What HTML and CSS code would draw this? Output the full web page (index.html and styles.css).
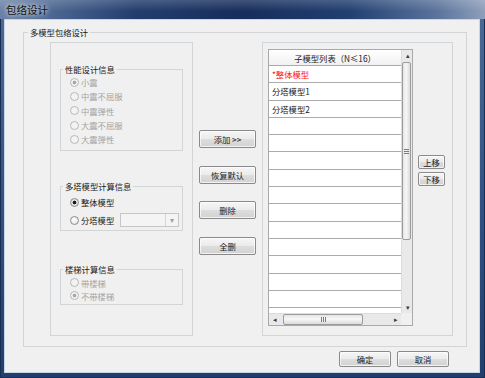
FILE: index.html
```html
<!DOCTYPE html>
<html lang="zh-CN">
<head>
    <meta charset="UTF-8">
    <title>包络设计</title>
    <link rel="stylesheet" href="styles.css">
</head>
<body>
<div class="window">
    <div class="titlebar"><span class="title">包络设计</span></div>
    <div class="client">
        <fieldset class="group outer">
            <legend>多模型包络设计</legend>
            <div class="outer-body">
                <div class="panel left-panel">
                    <fieldset class="group sub perf">
                        <legend>性能设计信息</legend>
                        <div class="group-body">
                            <div class="radio disabled checked"><span class="dot"></span>小震</div>
                            <div class="radio disabled"><span class="dot"></span>中震不屈服</div>
                            <div class="radio disabled"><span class="dot"></span>中震弹性</div>
                            <div class="radio disabled"><span class="dot"></span>大震不屈服</div>
                            <div class="radio disabled"><span class="dot"></span>大震弹性</div>
                        </div>
                    </fieldset>
                    <fieldset class="group sub tower">
                        <legend>多塔模型计算信息</legend>
                        <div class="group-body">
                            <div class="radio checked"><span class="dot"></span>整体模型</div>
                            <div class="radio"><span class="dot"></span>分塔模型<span class="combo"><span class="combo-btn">▾</span></span></div>
                        </div>
                    </fieldset>
                    <fieldset class="group sub stair">
                        <legend>楼梯计算信息</legend>
                        <div class="group-body">
                            <div class="radio disabled"><span class="dot"></span>带楼梯</div>
                            <div class="radio disabled checked"><span class="dot"></span>不带楼梯</div>
                        </div>
                    </fieldset>
                </div>

                <div class="btn-col">
                    <button class="btn">添加 &gt;&gt;</button>
                    <button class="btn">恢复默认</button>
                    <button class="btn">删除</button>
                    <button class="btn">全删</button>
                </div>

                <div class="panel right-panel">
                    <div class="list">
                        <div class="rows">
                            <div class="row head">子模型列表（N≤16）</div>
                            <div class="row red">*整体模型</div>
                            <div class="row">分塔模型1</div>
                            <div class="row">分塔模型2</div>
                            <div class="row"></div>
                            <div class="row"></div>
                            <div class="row"></div>
                            <div class="row"></div>
                            <div class="row"></div>
                            <div class="row"></div>
                            <div class="row"></div>
                            <div class="row"></div>
                            <div class="row"></div>
                            <div class="row"></div>
                            <div class="row"></div>
                            <div class="row"></div>
                        </div>
                        <div class="vscroll">
                            <span class="arrow">▴</span>
                            <span class="vthumb"><span class="grip-v"></span></span>
                            <span class="track"></span>
                            <span class="arrow">▾</span>
                        </div>
                        <div class="hscroll">
                            <span class="arrow">◂</span>
                            <span class="hthumb"><span class="grip-h"></span></span>
                            <span class="track"></span>
                            <span class="arrow">▸</span>
                        </div>
                        <div class="corner"></div>
                    </div>
                    <div class="move-col">
                        <button class="btn small">上移</button>
                        <button class="btn small">下移</button>
                    </div>
                </div>
            </div>
        </fieldset>

        <div class="footer">
            <button class="btn foot">确定</button>
            <button class="btn foot">取消</button>
        </div>
    </div>
</div>
</body>
</html>
```

FILE: styles.css
```css
body {
    margin: 0;
    font-family: "Noto Sans CJK SC", "Liberation Sans", sans-serif;
    font-size: 8.3px;
    color: #1a1a1a;
}

.window {
    width: 485px;
    height: 378px;
    box-sizing: border-box;
    display: flex;
    flex-direction: column;
    padding: 0 5px 5px 4px;
    background: linear-gradient(180deg, #4c6b98, #2d4f82 60%, #213f6e);
    box-shadow: inset 0 0 0 1px #1a2e52;
}

.titlebar {
    height: 19px;
    margin: 0 -5px 0 -4px;
    padding-left: 6px;
    display: flex;
    align-items: center;
    background:
        linear-gradient(180deg, rgba(255,255,255,.18), rgba(255,255,255,0) 60%),
        linear-gradient(90deg, #6a82a8 0%, #4d6893 10%, #223d6d 28%, #172d5b 50%, #213f70 72%, #5a739b 90%, #8e9fba 100%);
}

.title {
    font-size: 10.5px;
    color: #111;
    text-shadow: 0 0 4px rgba(255,255,255,.9), 0 0 8px rgba(255,255,255,.6);
}

.client {
    flex: 1;
    background: #f0f0f0;
    border: 1px solid #c9d5e4;
    display: flex;
    flex-direction: column;
}

/* group boxes */
.group {
    margin: 0;
    padding: 0;
    border: 1px solid #d2d5d8;
    box-sizing: border-box;
    min-width: 0;
}

.group legend {
    padding: 0 2px;
    margin-left: 4px;
    line-height: 14px;
}

.outer {
    margin: 5px 0 0 18px;
    width: 444px;
    height: 322px;
}

.outer-body {
    display: flex;
    align-items: flex-start;
    padding: 3px 13px 0 26px;
}

.panel {
    border: 1px solid #d2d5d8;
    box-sizing: border-box;
}

.left-panel {
    width: 143px;
    height: 294px;
    padding: 19px 0 0 9px;
}

.sub {
    width: 123px;
}

.sub legend {
    margin-left: 2px;
}

.perf {
    height: 89px;
}

.perf .group-body {
    margin-top: -1px;
}

.perf .radio {
    height: 14.3px;
}

.tower {
    height: 52px;
    margin-top: 28px;
}

.tower .group-body {
    padding-top: 2px;
    display: flex;
    flex-direction: column;
    gap: 4px;
}

.tower .radio {
    height: 14px;
}

.stair {
    height: 43px;
    margin-top: 31px;
}

.stair .radio {
    height: 13px;
}

.group-body {
    padding-left: 9px;
}

/* radio buttons */
.radio {
    display: flex;
    align-items: center;
    gap: 2px;
    white-space: nowrap;
}

.dot {
    width: 9px;
    height: 9px;
    box-sizing: border-box;
    border-radius: 50%;
    border: 1px solid #8b8d90;
    background: radial-gradient(circle at 40% 40%, #ffffff, #dcdcdc);
    flex: none;
}

.radio.checked .dot {
    background: radial-gradient(circle, #1c1c1c 0 1.6px, #e6e6e6 2.2px, #d4d4d4);
}

.radio.disabled {
    color: #a3a3a3;
}

.radio.disabled .dot {
    border-color: #b8b8b8;
    background: #f3f3f3;
}

.radio.disabled.checked .dot {
    background: radial-gradient(circle, #a8a8a8 0 1.6px, #f3f3f3 2.2px);
}

.combo {
    width: 59px;
    height: 14px;
    margin-left: 4px;
    box-sizing: border-box;
    border: 1px solid #c6c6c6;
    background: #f4f4f4;
    display: flex;
    justify-content: flex-end;
}

.combo-btn {
    width: 12px;
    border-left: 1px solid #d6d6d6;
    color: #a0a0a0;
    font-size: 8px;
    line-height: 12px;
    text-align: center;
}

/* buttons */
.btn {
    font: inherit;
    color: #1a1a1a;
    padding: 0;
    border: 1px solid #8a8a8a;
    border-radius: 2px;
    background: linear-gradient(180deg, #f6f6f6 0%, #ebebeb 48%, #dddddd 52%, #d2d2d2 100%);
    box-shadow: inset 0 0 0 1px rgba(255,255,255,.7);
}

.btn-col {
    width: 57px;
    margin-left: 6px;
    padding-top: 88px;
    display: flex;
    flex-direction: column;
    gap: 17.7px;
}

.btn-col .btn {
    height: 18px;
}

.right-panel {
    width: 191px;
    height: 294px;
    margin-left: 6px;
    padding: 6px 0 0 5px;
    display: flex;
    align-items: flex-start;
}

/* list */
.list {
    width: 145px;
    height: 277px;
    box-sizing: border-box;
    border: 1px solid #a9a9a9;
    display: grid;
    grid-template-columns: 1fr 11px;
    grid-template-rows: 1fr 12px;
    background: #fff;
}

.rows {
    overflow: hidden;
}

.row {
    height: 17.3px;
    box-sizing: border-box;
    border-bottom: 1px solid #ababab;
    padding-left: 3px;
    display: flex;
    align-items: center;
    white-space: nowrap;
}

.row.head {
    height: 16px;
    justify-content: center;
    padding-left: 0;
    background: linear-gradient(180deg, #ffffff, #f1f1f1);
}

.row.red {
    color: #ff1010;
}

.vscroll {
    display: flex;
    flex-direction: column;
    background: #e9e9e9;
    border-left: 1px solid #dcdcdc;
}

.hscroll {
    display: flex;
    background: #e9e9e9;
    border-top: 1px solid #dcdcdc;
}

.arrow {
    flex: none;
    width: 11px;
    height: 11px;
    font-size: 7px;
    line-height: 11px;
    text-align: center;
    color: #3c3c3c;
}

.track {
    flex: 1;
}

.vthumb {
    height: 178px;
    margin: 1px 1px 0 0;
    box-sizing: border-box;
    border: 1px solid #9c9c9c;
    border-radius: 2px;
    background: linear-gradient(90deg, #e4e4e4, #f7f7f7 45%, #dadada);
    display: flex;
    align-items: center;
    justify-content: center;
}

.grip-v {
    width: 5px;
    height: 5px;
    background: repeating-linear-gradient(180deg, #7d7d7d 0 1px, transparent 1px 2px);
}

.hthumb {
    width: 80px;
    margin-left: 3px;
    box-sizing: border-box;
    border: 1px solid #9c9c9c;
    border-radius: 2px;
    background: linear-gradient(180deg, #e4e4e4, #f7f7f7 45%, #dadada);
    display: flex;
    align-items: center;
    justify-content: center;
}

.grip-h {
    width: 5px;
    height: 5px;
    background: repeating-linear-gradient(90deg, #7d7d7d 0 1px, transparent 1px 2px);
}

.corner {
    background: #f0f0f0;
}

.move-col {
    margin: 106px 0 0 5px;
    display: flex;
    flex-direction: column;
    gap: 3px;
}

.btn.small {
    width: 27px;
    height: 14px;
}

.footer {
    display: flex;
    justify-content: flex-end;
    gap: 6px;
    padding: 4px 30px 0 0;
}

.btn.foot {
    width: 52px;
    height: 16px;
}
```
